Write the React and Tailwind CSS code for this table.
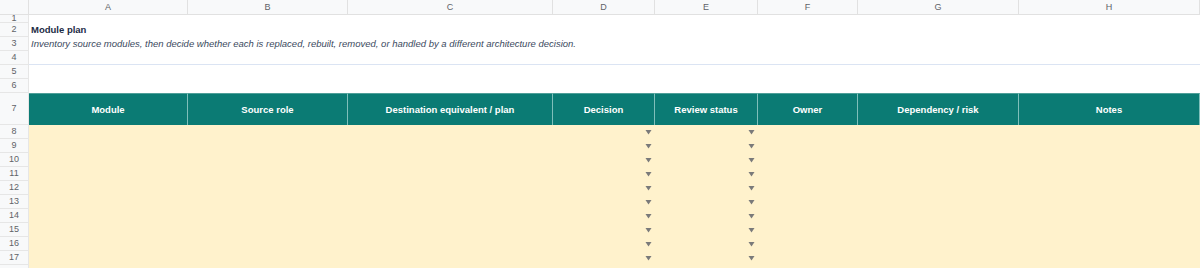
const cols = [
  { key: 'A', w: 'w-[159px]', label: 'Module' },
  { key: 'B', w: 'w-[160px]', label: 'Source role' },
  { key: 'C', w: 'w-[205px]', label: 'Destination equivalent / plan' },
  { key: 'D', w: 'w-[102px]', label: 'Decision', dropdown: true },
  { key: 'E', w: 'w-[103px]', label: 'Review status', dropdown: true },
  { key: 'F', w: 'w-[100px]', label: 'Owner' },
  { key: 'G', w: 'w-[161px]', label: 'Dependency / risk' },
  { key: 'H', w: 'w-[181px]', label: 'Notes' },
];

const dataRows = [8, 9, 10, 11, 12, 13, 14, 15, 16, 17, ''];

function RowLabel({ n, h }) {
  return (
    <div
      className={`w-[29px] shrink-0 ${h} flex items-center justify-center bg-[#f8f9fa] border-r border-b border-[#e6e6e6] text-[9px] text-[#5f6368]`}
    >
      {n}
    </div>
  );
}

function Caret() {
  return (
    <svg width="7" height="5" viewBox="0 0 7 5" className="block">
      <path d="M0.5 0 L6.5 0 L3.5 4.5 Z" fill="#7a7a7a" />
    </svg>
  );
}

export default function App() {
  return (
    <div className="w-[1200px] h-[268px] overflow-hidden bg-white font-['Liberation_Sans',Arial,sans-serif] leading-none">
      {/* Column letters */}
      <div className="flex h-[15px]">
        <div className="w-[29px] shrink-0 bg-[#f8f9fa] border-r border-b border-[#e1e1e1]" />
        {cols.map((c) => (
          <div
            key={c.key}
            className={`${c.w} shrink-0 flex items-center justify-center bg-[#f8f9fa] border-r border-b border-[#e1e1e1] text-[9px] text-[#5f6368]`}
          >
            {c.key}
          </div>
        ))}
      </div>

      {/* Row 1 */}
      <div className="flex">
        <RowLabel n={1} h="h-[8px]" />
        <div className="flex-1" />
      </div>

      {/* Title */}
      <div className="flex">
        <RowLabel n={2} h="h-[14px]" />
        <div className="flex-1 flex items-center pl-[2px] text-[9.5px] font-bold text-[#1c2b45]">
          Module plan
        </div>
      </div>

      {/* Description */}
      <div className="flex">
        <RowLabel n={3} h="h-[14px]" />
        <div className="flex-1 flex items-center pl-[2px] text-[9.5px] italic text-[#3b4a5e] whitespace-nowrap">
          Inventory source modules, then decide whether each is replaced, rebuilt, removed, or handled by a different architecture decision.
        </div>
      </div>

      {/* Row 4 with blue bottom rule */}
      <div className="flex">
        <RowLabel n={4} h="h-[14px]" />
        <div className="flex-1 border-b border-[#dbe4f3]" />
      </div>

      <div className="flex">
        <RowLabel n={5} h="h-[14px]" />
        <div className="flex-1" />
      </div>
      <div className="flex">
        <RowLabel n={6} h="h-[14px]" />
        <div className="flex-1" />
      </div>

      {/* Header row */}
      <div className="flex">
        <RowLabel n={7} h="h-[32px]" />
        {cols.map((c) => (
          <div
            key={c.key}
            className={`${c.w} shrink-0 h-[32px] flex items-center justify-center bg-[#0b7b74] border-r border-[#7fbfba] border-t border-t-[#4f9f99] text-[9.5px] font-bold text-white`}
          >
            {c.label}
          </div>
        ))}
      </div>

      {/* Data rows */}
      {dataRows.map((n, i) => (
        <div key={i} className="flex">
          <RowLabel n={n} h="h-[14px]" />
          {cols.map((c) => (
            <div
              key={c.key}
              className={`${c.w} shrink-0 h-[14px] bg-[#fff2cc] flex items-center justify-end pr-[3px]`}
            >
              {c.dropdown && <Caret />}
            </div>
          ))}
        </div>
      ))}
    </div>
  );
}
